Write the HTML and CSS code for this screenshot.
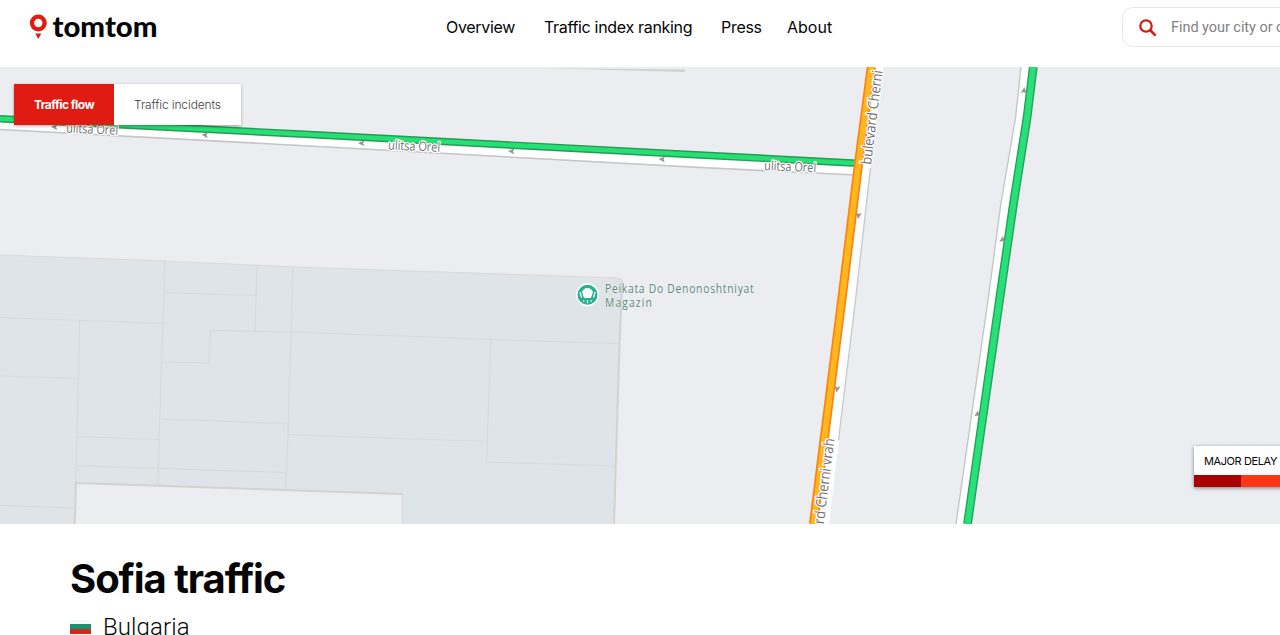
FILE: index.html
```html
<!DOCTYPE html>
<html lang="en">
<head>
<meta charset="utf-8">
<title>Sofia traffic</title>
<link rel="stylesheet" href="styles.css">
</head>
<body>
<header class="header">
  <a class="logo" aria-label="tomtom">
    <svg width="134" height="34" viewBox="28 12 134 34">
      <circle cx="38.3" cy="23" r="6.3" fill="none" stroke="#df1b12" stroke-width="4.3"/>
      <path d="M35.3 33.4h6l-3 5.6z" fill="#df1b12"/>
      <text class="wordmark" x="52.5" y="37" textLength="105" lengthAdjust="spacingAndGlyphs">tomtom</text>
    </svg>
  </a>
  <nav class="nav">
    <a class="nav-overview">Overview</a>
    <a class="nav-ranking">Traffic index ranking</a>
    <a class="nav-press">Press</a>
    <a class="nav-about">About</a>
  </nav>
  <div class="search">
    <svg width="18" height="18" viewBox="0 0 18 18" fill="none" stroke="#cf1b12" stroke-width="2.2"><circle cx="7" cy="7" r="5.7"/><path d="M11 11l5.6 5.6" stroke-width="2.6"/></svg>
    <span class="search-text">Find your city or country</span>
  </div>
</header>

<section class="map">
  <svg class="map-canvas" width="1280" height="457" viewBox="0 67 1280 457">
    <!-- buildings -->
    <path d="M0 255L165 261 294 267 618 278Q623 279 622.500 283L619 360 614 524H402.500V494L76 483.500 74.500 524H0z" fill="#dee4e8"/>
    <g fill="none" stroke="#d7dad9" stroke-width="1.2">
      <path d="M0 255L165 261 294 267 618 278Q623 279 622.500 283"/>
      <path d="M165 261L159 440 158 485M257 265L255 332M293 266L288 434 285.500 488"/>
      <path d="M165 292.500L256 295.500M0 317.500L164 323.500M79.500 320L77 437 75.500 484M0 376L78 378.500"/>
      <path d="M163 362L209 363 210.500 330.500 293 332 491 339.500 620 343.500M491 339.500L486.500 462 614 466"/>
      <path d="M161 419L287 423.500M288 434.500L486.500 441.500M77 436.500L159 439.500M76 465.500L285 472.500M0 505.500L74 508"/>
      <path d="M402.500 494V524"/>
    </g>
    <g fill="none" stroke="#d2d3d1" stroke-width="2">
      <path d="M622 282L619 360 614 524M74.700 524L76 483L402.500 494"/>
    </g>
    <path d="M538 68L685 69.500V72L648 71z" fill="#d0d2d0"/>

    <!-- carriageways -->
    <path d="M0 119L860 163V175L0 129.500z" fill="#fff"/>
    <path d="M0 129.500L300 145.500 700 167.500 856 175" fill="none" stroke="#c4c5c7" stroke-width="1.6"/>
    <path d="M871 67H883L870 170 855.500 300 829 524H814z" fill="#fff"/>
    <path d="M870.500 168L855.500 300 838.500 440" fill="none" stroke="#c9cacd" stroke-width="1.4"/>
    <path d="M1021 67L1015.500 118 1001 203 988 300 956 524H968L999.500 300 1014 200 1027 118 1033.500 67z" fill="#fff"/>
    <path d="M1021 67L1015.500 118 1001 203 988 300 956 524" fill="none" stroke="#c4c6c9" stroke-width="1.4"/>

    <!-- live flow -->
    <path d="M0 118.700L300 134 700 155 862 163.500" fill="none" stroke="#249c57" stroke-width="7.500"/>
    <path d="M0 118.700L300 134 700 155 862 163.500" fill="none" stroke="#27df73" stroke-width="4.600"/>
    <path d="M871.300 67L858 168 841.800 300 813.500 524" fill="none" stroke="#fc8214" stroke-width="9.200"/>
    <path d="M871.300 67L858 168 841.800 300 813.500 524" fill="none" stroke="#ffb71d" stroke-width="5.800"/>
    <path d="M1033.300 67L1027 118 1014 200 999.500 300 967.500 524" fill="none" stroke="#24a258" stroke-width="8.800"/>
    <path d="M1033.300 67L1027 118 1014 200 999.500 300 967.500 524" fill="none" stroke="#27e079" stroke-width="6"/>

    <!-- direction arrows -->
    <g fill="#929497">
      <path d="M-3.500 0L3 -3 1.500 0 3 3z" transform="translate(54.500 127) rotate(3)"/>
      <path d="M-3.500 0L3 -3 1.500 0 3 3z" transform="translate(205 135) rotate(3)"/>
      <path d="M-3.500 0L3 -3 1.500 0 3 3z" transform="translate(361.500 143.300) rotate(3)"/>
      <path d="M-3.500 0L3 -3 1.500 0 3 3z" transform="translate(511.500 151.300) rotate(3)"/>
      <path d="M-3.500 0L3 -3 1.500 0 3 3z" transform="translate(662 159.300) rotate(3)"/>
      <path d="M-3.500 0L3 -3 1.500 0 3 3z" transform="translate(858.500 215.500) rotate(-83)"/>
      <path d="M-3.500 0L3 -3 1.500 0 3 3z" transform="translate(837 389) rotate(-83)"/>
      <path d="M-3.500 0L3 -3 1.500 0 3 3z" transform="translate(1024 90.500) rotate(97)"/>
      <path d="M-3.500 0L3 -3 1.500 0 3 3z" transform="translate(1002.500 239.500) rotate(97)"/>
      <path d="M-3.500 0L3 -3 1.500 0 3 3z" transform="translate(977.500 414) rotate(97)"/>
    </g>

    <!-- street names -->
    <g class="street">
      <text transform="translate(66 132.500) rotate(2.500)" textLength="52" lengthAdjust="spacingAndGlyphs">ulitsa Orel</text>
      <text transform="translate(388 149.500) rotate(2.500)" textLength="52" lengthAdjust="spacingAndGlyphs">ulitsa Orel</text>
      <text transform="translate(764 170) rotate(2.500)" textLength="52" lengthAdjust="spacingAndGlyphs">ulitsa Orel</text>
      <text class="boulevard" transform="translate(871 165) rotate(-83)" textLength="95" lengthAdjust="spacingAndGlyphs">bulevard Cherni</text>
      <text class="boulevard" transform="translate(819 564) rotate(-83)" textLength="126" lengthAdjust="spacingAndGlyphs">bulevard Cherni vrah</text>
    </g>

    <!-- shop marker -->
    <circle cx="587.500" cy="294.800" r="11.500" fill="#fff"/>
    <circle cx="587.500" cy="294.800" r="10" fill="#27b292"/>
    <path d="M584.300 297.500L582.500 291.500 585 288.800H590L592.500 291.500 590.700 297.500z" fill="#fff" stroke="#fff" stroke-linejoin="round"/>
    <path d="M579.900 292l1.600 5.500M595.100 292l-1.600 5.500M583.800 300.300v1.500M587.500 300v3.300M591.200 300.300v1.500" stroke="#fff" stroke-width="1.200"/>
    <g class="poi">
      <text transform="translate(605 292.500) scale(.86 1)" textLength="173">Peikata Do Denonoshtniyat</text>
      <text transform="translate(605 307) scale(.86 1)" textLength="54.500">Magazin</text>
    </g>
  </svg>
  <div class="tabs">
    <button class="tab tab-active">Traffic flow</button>
    <button class="tab">Traffic incidents</button>
  </div>
  <div class="legend">
    <div class="legend-label">MAJOR DELAY</div>
    <div class="legend-bar"><i class="severe"></i><i class="major"></i></div>
  </div>
</section>

<main class="city">
  <h1 class="city-name">Sofia traffic</h1>
  <div class="country">
    <svg width="21" height="14" viewBox="0 0 21 14"><path d="M0 0h21v4H0z" fill="#f7f8f7"/><path d="M0 4h21v5H0z" fill="#16936f"/><path d="M0 9h21v5H0z" fill="#d2281c"/></svg>
    <span class="country-name">Bulgaria</span>
  </div>
</main>
</body>
</html>
```
FILE: styles.css
```css
* { box-sizing: border-box; }
body { margin: 0; height: 635px; overflow: hidden; background: #fff; color: #050505; font-family: Inter, sans-serif; }
.header { height: 67px; padding-left: 28px; display: flex; align-items: flex-start; overflow: hidden; }
.logo { width: 418px; flex: none; padding-top: 12px; }
.logo svg { display: block; }
.wordmark { font: 900 29px Lato, sans-serif; fill: #050505; }
.nav { display: flex; width: 676px; flex: none; gap: 28px; padding-top: 16px; font-size: 16px; line-height: 22px; white-space: nowrap; }
.nav-overview { width: 70px; letter-spacing: -.25px; }
.nav-ranking { width: 149px; letter-spacing: -.32px; }
.nav-press { width: 38px; letter-spacing: -.9px; }
.nav-press, .nav-overview { letter-spacing: -.3px; }
.search { flex: none; width: 300px; height: 40px; margin-top: 7px; padding-left: 16px; border: 1px solid #e7e7e9; border-radius: 11px; display: flex; align-items: center; gap: 14px; }
.search svg { position: relative; top: 1px; }
.search-text { color: #818181; font: 14.5px/20px Roboto, sans-serif; letter-spacing: -.05px; white-space: nowrap; padding-top: 1px; }
.map { position: relative; height: 457px; background: #ebedf1; overflow: hidden; }
.map-canvas { display: block; }
.street { font: 13px "Open Sans", sans-serif; fill: #707275; stroke: #fff; stroke-width: 2.5px; stroke-linejoin: round; paint-order: stroke; }
.boulevard { font-size: 14.5px; }
.poi { font: 500 12px "Open Sans", sans-serif; fill: #5d8a78; stroke: #f2f4f6; stroke-width: 1px; paint-order: stroke; }
.tabs { position: absolute; left: 14px; top: 17px; height: 41px; display: flex; background: #fff; box-shadow: 0 1px 3px #0005; }
.tab { width: 127px; padding: 0; border: 0; background: #fff; color: #424242; font: 300 12px Inter, sans-serif; letter-spacing: -.12px; }
.tab-active { width: 100px; background: #df1b12; color: #fff; font-weight: 700; letter-spacing: -.55px; }
.legend { position: absolute; left: 1194px; top: 379px; width: 190px; background: #fff; box-shadow: 0 1px 4px #0007; }
.legend-label { height: 29px; padding-left: 10px; font-size: 11px; line-height: 30px; letter-spacing: -.4px; white-space: nowrap; }
.legend-bar { display: flex; height: 12px; }
.legend-bar i { width: 47px; }
.legend-bar .major { width: 143px; }
.severe { background: #ab0000; }
.major { background: #ff3714; }
.city { padding: 30px 0 0 70px; }
.city-name { margin: 0; font-size: 40px; line-height: 50px; font-weight: 700; letter-spacing: -1.05px; }
.country { display: flex; gap: 12px; align-items: flex-start; padding-top: 7px; }
.country svg { margin-top: 9px; }
.country-name { font: 24px/32px Roboto, sans-serif; font-weight: 300; letter-spacing: .1px; }
```
